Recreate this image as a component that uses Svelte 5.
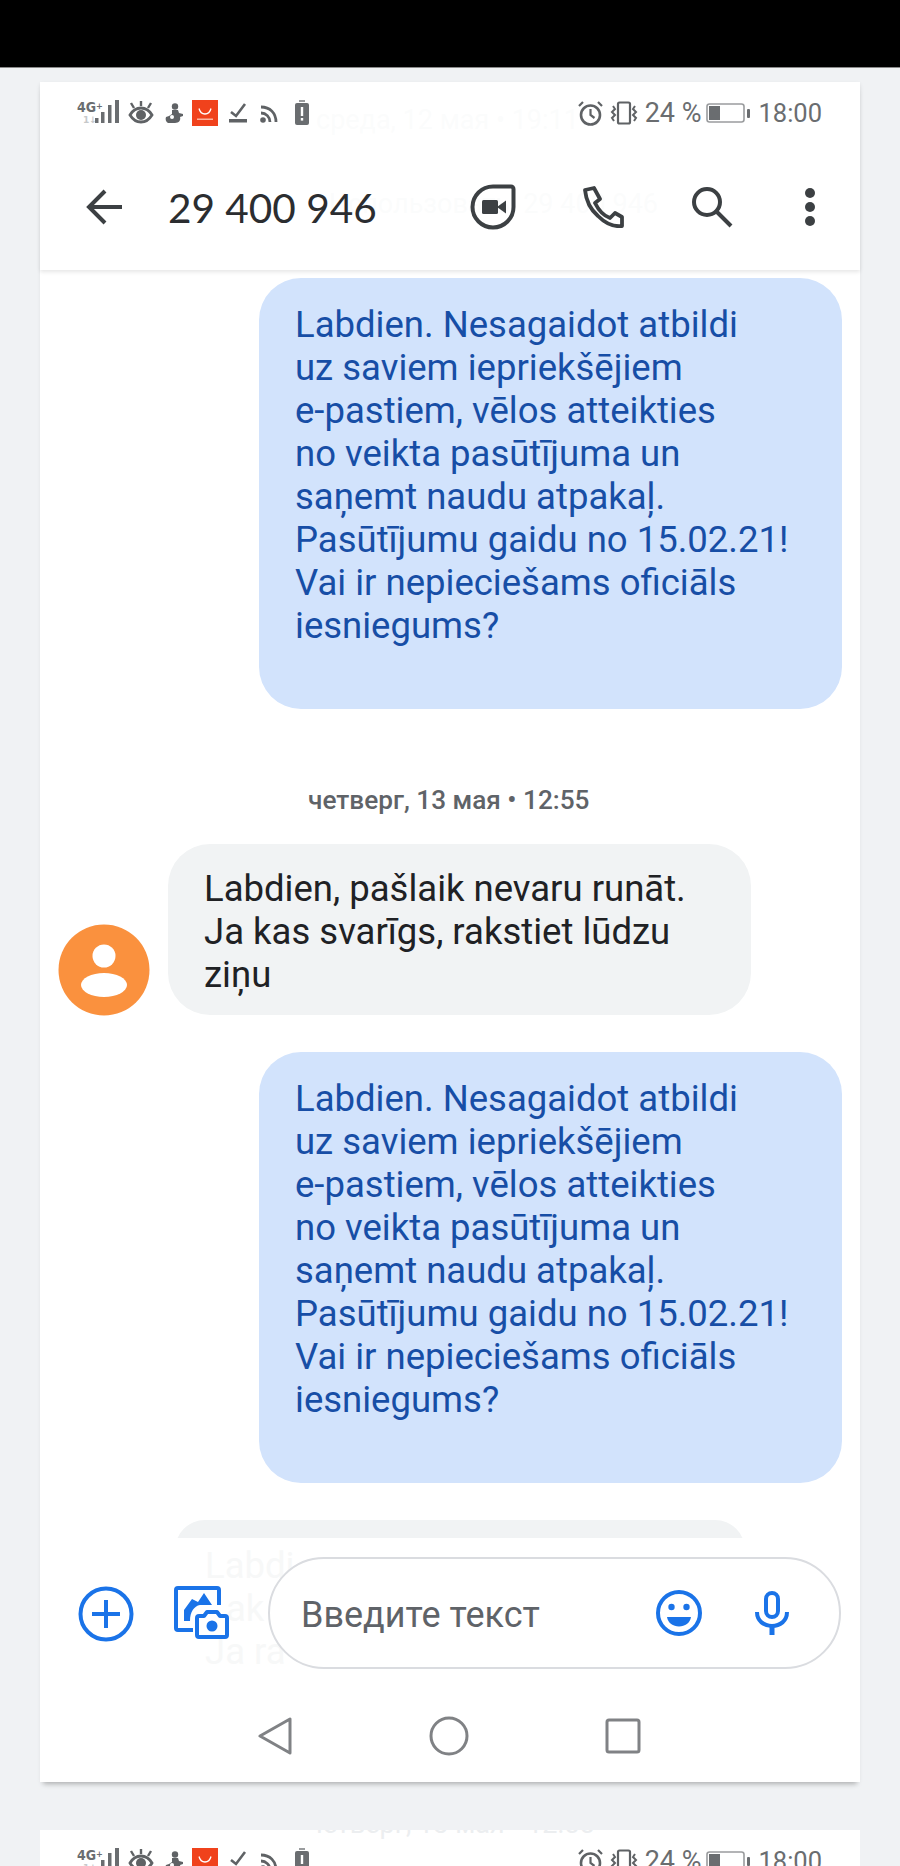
<script>
  const outgoing = `Labdien. Nesagaidot atbildi
uz saviem iepriekšējiem
e-pastiem, vēlos atteikties
no veikta pasūtījuma un
saņemt naudu atpakaļ.
Pasūtījumu gaidu no 15.02.21!
Vai ir nepieciešams oficiāls
iesniegums?`;
  const incoming = `Labdien, pašlaik nevaru runāt.
Ja kas svarīgs, rakstiet lūdzu
ziņu`;
</script>

{#snippet statusBar()}
  <div class="status">
    <div class="status-left">
      <svg class="net" viewBox="0 0 44 26" width="44" height="26">
        <text x="0" y="12" class="net-top">4G<tspan class="net-plus" dy="-3">+</tspan></text>
        <text x="6" y="23" class="net-sub">1↓</text>
        <rect x="18" y="18" width="3.500" height="5" fill="#6a6d70" />
        <rect x="24" y="12" width="3.500" height="11" fill="#6a6d70" />
        <rect x="31" y="5" width="3.500" height="18" fill="#6a6d70" />
        <rect x="38" y="0" width="4" height="23" fill="#6a6d70" />
      </svg>
      <svg viewBox="0 0 26 24" width="26" height="24" class="eye">
        <path d="M2 14c3-5 7-7 11-7s8 2 11 7c-3 5-7 7-11 7s-8-2-11-7z" fill="none" stroke="#5f6265" stroke-width="2.800" />
        <circle cx="13" cy="14" r="5" fill="#5f6265" />
        <path d="M3 2l3 5M23 2l-3 5M13 0v5" stroke="#5f6265" stroke-width="2.400" />
      </svg>
      <svg viewBox="0 0 18 20" width="18" height="20" class="fig">
        <circle cx="10" cy="3.500" r="3.200" fill="#5f6265" />
        <path d="M7 7h6l1 3 4 1v2l-3 1c1 3-1 6-5 6H3c-2-1-3-4-2-6l3-1 3-2z" fill="#5f6265" />
        <circle cx="7" cy="14" r="2" fill="#fff" />
      </svg>
      <svg viewBox="0 0 26 26" width="26" height="26" class="ali">
        <rect width="26" height="26" fill="#f0421c" />
        <path d="M7 8.500c1 4 3 5.500 6 5.500s5-1.500 6-5.500" fill="none" stroke="#fff" stroke-width="1.300" />
        <rect x="5" y="18.500" width="16" height="1.500" fill="#f9b3a0" />
      </svg>
      <svg viewBox="0 0 18 22" width="18" height="22" class="tick">
        <path d="M2 11l5 4L16 3" fill="none" stroke="#5f6265" stroke-width="2.600" />
        <rect x="0" y="18" width="18" height="3.500" fill="#5f6265" />
      </svg>
      <svg viewBox="0 0 18 18" width="18" height="18" class="rss">
        <circle cx="3" cy="15" r="2.800" fill="#5f6265" />
        <path d="M1 8c5 0 9 4 9 9M1 2c9 0 15 6 15 15" fill="none" stroke="#5f6265" stroke-width="2.800" />
      </svg>
      <svg viewBox="0 0 14 25" width="14" height="25" class="low">
        <rect x="4" y="0" width="6" height="2" fill="#9a9c9e" />
        <rect x="0" y="3" width="14" height="22" rx="2" fill="#6a6d70" />
        <rect x="5.800" y="7" width="2.400" height="9" fill="#fff" />
        <rect x="5.800" y="18" width="2.400" height="2.600" fill="#fff" />
      </svg>
    </div>
    <div class="status-right">
      <svg viewBox="0 0 25 25" width="25" height="25">
        <circle cx="12.500" cy="14" r="9.500" fill="none" stroke="#5f6265" stroke-width="2.600" />
        <path d="M12.500 8v6l4 3" fill="none" stroke="#5f6265" stroke-width="2.200" />
        <path d="M1 5l4-4M24 5l-4-4" stroke="#5f6265" stroke-width="2.200" />
      </svg>
      <svg viewBox="0 0 28 24" width="28" height="24" class="vib">
        <rect x="8" y="1.500" width="12" height="21" rx="1.500" fill="none" stroke="#5f6265" stroke-width="2.200" />
        <path d="M3 5l2 3-3 3 3 3-3 3 2 3M25 5l-2 3 3 3-3 3 3 3-2 3" fill="none" stroke="#5f6265" stroke-width="2" />
      </svg>
      <span class="pct">24 %</span>
      <svg viewBox="0 0 44 20" width="44" height="20" class="batt">
        <rect x="1" y="1" width="37" height="18" rx="2.500" fill="none" stroke="#9a9c9e" stroke-width="1.600" />
        <rect x="3" y="3" width="11" height="14" fill="#6a6d70" />
        <rect x="41" y="6" width="3" height="9" rx="1" fill="#6a6d70" />
      </svg>
      <span class="time">18:00</span>
    </div>
  </div>
{/snippet}

<div class="page">
  <div class="black"></div>

  <div class="card">
    <span class="ghost ghost-date">среда, 12 мая • 19:11</span>
    <span class="ghost ghost-name">Использовать: 29 400 946</span>

    <div class="head">
      {@render statusBar()}
      <div class="toolbar">
        <svg class="back" viewBox="0 0 38 36" width="38" height="36">
          <path d="M36 18H3M19 2L3 18l16 16" fill="none" stroke="#3c4043" stroke-width="4" />
        </svg>
        <span class="title">29 400 946</span>
        <div class="actions">
          <svg viewBox="0 0 46 46" width="46" height="46" class="duo">
            <path d="M23 2.500h18a2.500 2.500 0 0 1 2.500 2.500v18a20.500 20.500 0 1 1-20.500-20.500z" fill="none" stroke="#3c4043" stroke-width="4" stroke-linejoin="round" />
            <rect x="12" y="16" width="16" height="14" rx="1.500" fill="#3c4043" />
            <path d="M27 23l9-6.500v13z" fill="#3c4043" />
          </svg>
          <svg viewBox="0 0 42 42" width="42" height="42" class="phone">
            <path d="M3 4l9-2 6 11-5 4c4 8 9 13 15 15l5-5 7 4 0 9c-8 1-17-3-24-10C9 24 4 14 3 4z" fill="none" stroke="#3c4043" stroke-width="3.800" stroke-linejoin="round" />
          </svg>
          <svg viewBox="0 0 42 42" width="42" height="42" class="search">
            <circle cx="16" cy="16" r="13" fill="none" stroke="#3c4043" stroke-width="4" />
            <path d="M25 25l15 15" stroke="#3c4043" stroke-width="4" />
          </svg>
          <div class="dots"><i></i><i></i><i></i></div>
        </div>
      </div>
    </div>

    <div class="messages">
      <div class="bubble out">{outgoing}</div>
      <div class="date">четверг, 13 мая • 12:55</div>
      <div class="row">
        <svg class="avatar" viewBox="0 0 92 92" width="92" height="92">
          <circle cx="46" cy="46" r="45.500" fill="#fa913e" />
          <circle cx="46" cy="32" r="11.500" fill="#fff" />
          <ellipse cx="46" cy="61" rx="23" ry="12" fill="#fff" />
        </svg>
        <div class="bubble in">{incoming}</div>
      </div>
      <div class="bubble out next">{outgoing}</div>
      <div class="bubble partial"></div>
    </div>

    <div class="composer">
      <span class="ghost ghost-a">Labdi</span>
      <span class="ghost ghost-b">ak</span>
      <span class="ghost ghost-c">Ja ra</span>
      <svg class="plus" viewBox="0 0 56 56" width="56" height="56">
        <circle cx="28" cy="28" r="25.500" fill="none" stroke="#1a73e8" stroke-width="4" />
        <path d="M14 28h28M28 14v28" stroke="#1a73e8" stroke-width="4" />
      </svg>
      <svg class="gallery" viewBox="0 0 56 56" width="56" height="56">
        <path d="M19 45H4a2 2 0 0 1-2-2V5a2 2 0 0 1 2-2h39a2 2 0 0 1 2 2v15" fill="none" stroke="#1a73e8" stroke-width="4" />
        <path d="M10 36V25l8-11 6 3 6-9 8 12H26c-6 1-10 7-10 16z" fill="#1a73e8" />
        <path d="M25 31h5l3-4h10l3 4h5a2 2 0 0 1 2 2v17a2 2 0 0 1-2 2H25a2 2 0 0 1-2-2V33a2 2 0 0 1 2-2z" fill="#fff" stroke="#1a73e8" stroke-width="4" stroke-linejoin="round" />
        <circle cx="38" cy="41" r="5.500" fill="#1a73e8" />
      </svg>
      <div class="input">
        <span class="placeholder">Введите текст</span>
        <svg class="smile" viewBox="0 0 46 46" width="46" height="46">
          <circle cx="23" cy="23" r="21" fill="none" stroke="#1a73e8" stroke-width="4" />
          <circle cx="15.500" cy="17" r="3.200" fill="#1a73e8" />
          <circle cx="30.500" cy="17" r="3.200" fill="#1a73e8" />
          <path d="M11 27h24c-1 6-6 9.500-12 9.500S12 33 11 27z" fill="#1a73e8" />
        </svg>
        <svg class="mic" viewBox="0 0 34 44" width="34" height="44">
          <rect x="11" y="2" width="12" height="24" rx="6" fill="none" stroke="#1a73e8" stroke-width="4" />
          <path d="M2 21c0 9 7 14 15 14s15-5 15-14" fill="none" stroke="#1a73e8" stroke-width="4" />
          <rect x="14.500" y="34" width="5" height="10" fill="#1a73e8" />
        </svg>
      </div>
    </div>

    <div class="nav">
      <svg viewBox="0 0 34 38" width="34" height="38">
        <path d="M32 2v34L2 19z" fill="none" stroke="#808285" stroke-width="3" stroke-linejoin="round" />
      </svg>
      <svg viewBox="0 0 40 40" width="40" height="40">
        <circle cx="20" cy="20" r="18" fill="none" stroke="#808285" stroke-width="3" />
      </svg>
      <svg viewBox="0 0 36 36" width="36" height="36">
        <rect x="2" y="2" width="32" height="32" rx="2" fill="none" stroke="#808285" stroke-width="3" />
      </svg>
    </div>
  </div>

  <div class="card second">
    <span class="ghost ghost-top">четверг, 13 мая • 12:55</span>
    {@render statusBar()}
  </div>
</div>

<style>
  :global(body) {
    margin: 0;
    background: #f0f2f4;
  }

  .page {
    height: 1866px;
    overflow: hidden;
    background: #f0f2f4;
    font-family: Roboto, "Liberation Sans", sans-serif;
  }

  .black {
    height: 67px;
    background: #000;
    border-bottom: 1px solid #8a8a8a;
  }

  .card {
    position: relative;
    margin: 14px 40px 0;
    height: 1700px;
    background: #fff;
    display: flex;
    flex-direction: column;
    box-shadow: 0 5px 5px -3px rgba(0, 0, 0, 0.28);
  }

  .card.second {
    margin-top: 48px;
    height: 60px;
    overflow: hidden;
    box-shadow: none;
  }

  .ghost {
    position: absolute;
    color: #f7f8f8;
    font-size: 27px;
    white-space: nowrap;
  }

  .ghost-date {
    left: 276px;
    top: 22px;
  }

  .ghost-name {
    right: 202px;
    top: 106px;
  }

  .ghost-top {
    left: 268px;
    top: -22px;
    color: #eceef0;
  }

  .head {
    position: relative;
    height: 188px;
    background: rgba(255, 255, 255, 0.55);
    box-shadow: 0 2px 4px rgba(0, 0, 0, 0.1);
    z-index: 1;
  }

  .status {
    display: flex;
    justify-content: space-between;
    padding: 18px 38px 0 37px;
    height: 26px;
    color: #6a6d70;
  }

  .status-left {
    display: flex;
    align-items: flex-start;
  }

  .status-left svg {
    display: block;
    overflow: visible;
  }

  .net-top {
    font: bold 14px "DejaVu Sans", sans-serif;
    font-stretch: condensed;
    fill: #6a6d70;
  }

  .net-plus {
    font-size: 9px;
  }

  .net-sub {
    font: bold 9px "DejaVu Sans", sans-serif;
    fill: #c6c8ca;
  }

  .eye {
    margin: 1px 0 0 7px;
  }

  .fig {
    margin: 3px 0 0 11px;
  }

  .ali {
    margin-left: 9px;
  }

  .tick {
    margin: 1px 0 0 11px;
  }

  .rss {
    margin: 5px 0 0 13px;
  }

  .low {
    margin-left: 17px;
  }

  .status-right {
    display: flex;
    align-items: center;
    height: 26px;
  }

  .vib {
    margin-left: 7px;
  }

  .pct {
    margin-left: 7px;
    font-size: 27px;
  }

  .batt {
    margin-left: 5px;
  }

  .time {
    margin-left: 8px;
    font-size: 25.500px;
  }

  .toolbar {
    display: flex;
    align-items: center;
    height: 90px;
    margin-top: 36px;
    padding: 0 0 0 46px;
  }

  .title {
    margin-left: 44px;
    font-family: Lato, Roboto, sans-serif;
    font-size: 40.500px;
    color: #2b2d30;
  }

  .actions {
    margin-left: auto;
    display: flex;
    align-items: center;
    padding-right: 45px;
  }

  .phone {
    margin-left: 66px;
  }

  .search {
    margin-left: 67px;
  }

  .dots {
    display: flex;
    flex-direction: column;
    gap: 4px;
    margin-left: 72px;
  }

  .dots i {
    width: 10px;
    height: 10px;
    border-radius: 50%;
    background: #3c4043;
  }

  .messages {
    height: 1268px;
    overflow: hidden;
    padding: 8px 18px 0;
    display: flex;
    flex-direction: column;
    box-sizing: border-box;
  }

  .bubble {
    box-sizing: border-box;
    width: 583px;
    border-radius: 42px;
    font-size: 36.500px;
    line-height: 43px;
    white-space: pre-line;
    flex: none;
  }

  .out {
    height: 431px;
    align-self: flex-end;
    padding: 25px 20px 0 36px;
    background: #d2e3fc;
    color: #174ea6;
  }

  .out.next {
    margin-top: 37px;
  }

  .date {
    margin: 76px 0 29px;
    padding-left: 250px;
    font-size: 26.200px;
    font-weight: 500;
    line-height: 30px;
    color: #5f6368;
  }

  .row {
    display: flex;
    align-items: flex-end;
    gap: 18px;
  }

  .avatar {
    flex: none;
    margin-bottom: -1px;
  }

  .in {
    height: 171px;
    padding: 23px 20px 0 36px;
    background: #f1f3f4;
    color: #202124;
  }

  .partial {
    height: 60px;
    margin: 37px 0 0 117px;
    width: 570px;
    background: #f1f3f4;
  }

  .composer {
    position: relative;
    display: flex;
    align-items: center;
    height: 131px;
    box-sizing: border-box;
    padding: 19px 19px 0 38px;
  }

  .ghost-a {
    left: 165px;
    top: 6px;
    font-size: 36.500px;
  }

  .ghost-b {
    left: 186px;
    top: 49px;
    font-size: 36.500px;
  }

  .ghost-c {
    left: 165px;
    top: 92px;
    font-size: 36.500px;
  }

  .plus,
  .gallery {
    position: relative;
    flex: none;
  }

  .plus {
    margin-top: 2px;
  }

  .gallery {
    margin-left: 40px;
  }

  .input {
    position: relative;
    flex: 1;
    height: 112px;
    margin-left: 38px;
    box-sizing: border-box;
    display: flex;
    align-items: center;
    padding-left: 31px;
    border: 2px solid #dadce0;
    border-radius: 56px;
    background: #fff;
  }

  .placeholder {
    margin-top: 4px;
    font-size: 36px;
    color: #5f6368;
  }

  .smile {
    margin-left: auto;
  }

  .mic {
    margin: 0 50px 0 53px;
  }

  .nav {
    flex: 1;
    display: flex;
    align-items: center;
    padding: 20px 219px 0 218px;
    justify-content: space-between;
  }
</style>
